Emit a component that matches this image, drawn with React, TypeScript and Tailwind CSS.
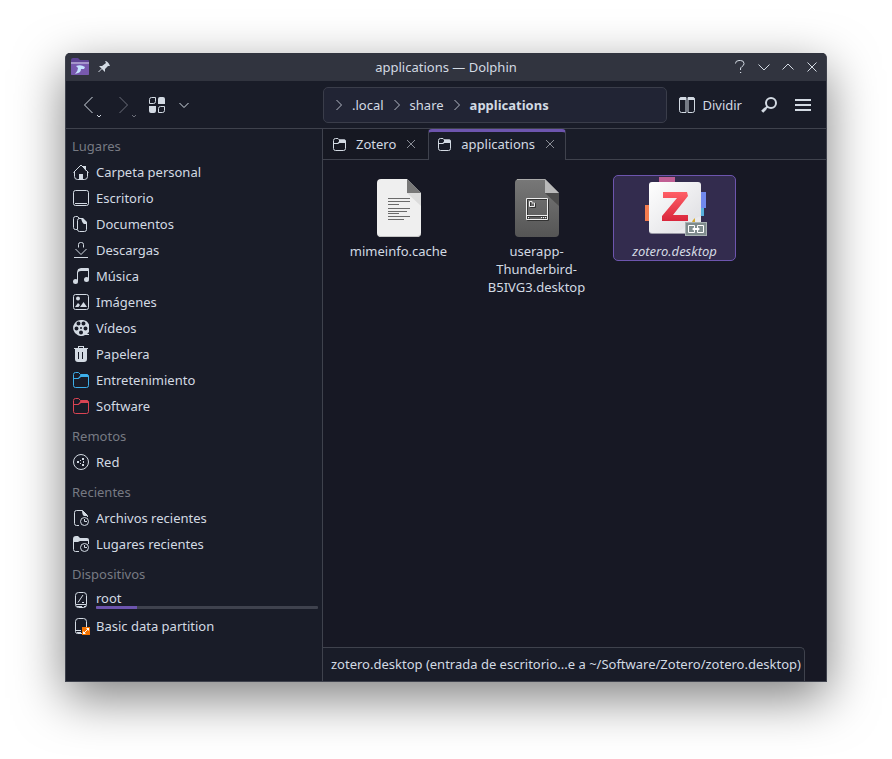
import type { ReactNode } from "react";

function Svg({ size = 16, children, className = "" }: { size?: number; children: ReactNode; className?: string }) {
  return (
    <svg width={size} height={size} viewBox={`0 0 ${size} ${size}`} fill="none" stroke="currentColor" className={`shrink-0 ${className}`} aria-hidden="true">
      {children}
    </svg>
  );
}

const HomeIcon = () => (
  <Svg>
    <path d="M.5 8.500 8 1 15.500 8.500M1.500 8v4.500q0 3 3 3h7q3 0 3-3V8" />
    <path d="M6 15v-5h4v5zM9 2h4v5z" fill="currentColor" stroke="none" />
  </Svg>
);
const DesktopIcon = () => (
  <Svg>
    <rect x=".5" y=".5" width="15" height="15" rx="2" />
    <path d="M2 13.500h12" />
  </Svg>
);
const DocumentsIcon = () => (
  <Svg>
    <path d="M4 13.500H2.500q-2 0-2-2v-9q0-2 2-2h2L7 3M6.500 2.500h3l4 4v7q0 2-2 2h-5q-2 0-2-2v-9q0-2 2-2z" />
    <path d="M4 0 8 3 6 3zM8 2h2l4 4v2H11Q9 7 8 2z" fill="currentColor" stroke="none" />
  </Svg>
);
const DownloadIcon = () => (
  <Svg>
    <path d="M5.500 5.500v-3q0-2 2-2h1q2 0 2 2v3M2.500 7 8 12.500 13.500 7M1 15.500h14" />
  </Svg>
);
const MusicIcon = () => (
  <Svg>
    <path d="M4.500 13V4q0-3.500 3.500-3.500h7.500V11" />
    <path d="M5 1h10v2H8Q5 3 5 5z" fill="currentColor" stroke="none" />
    <circle cx="2.500" cy="13.500" r="2.500" fill="currentColor" stroke="none" />
    <circle cx="13.500" cy="11.500" r="2.500" fill="currentColor" stroke="none" />
  </Svg>
);
const PictureIcon = () => (
  <Svg>
    <rect x=".5" y=".5" width="15" height="15" rx="2" />
    <circle cx="5" cy="4.500" r="2" fill="currentColor" stroke="none" />
    <path d="M7 13 10.500 8 14 13zM2 13l3-4 2 2-1.500 2z" fill="currentColor" stroke="none" />
  </Svg>
);
const VideoIcon = () => (
  <Svg>
    <path
      fillRule="evenodd"
      d="M8 0a8 8 0 1 0 4 15h4v-1h-2A8 8 0 0 0 8 0zM5.500 1.500a2 2 0 1 1 0 4 2 2 0 1 1 0-4zM10.500 1.500a2 2 0 1 1 0 4 2 2 0 1 1 0-4zM3.500 6.500a2 2 0 1 1 0 4 2 2 0 1 1 0-4zM12.500 6.500a2 2 0 1 1 0 4 2 2 0 1 1 0-4zM8 10.500a2 2 0 1 1 0 4 2 2 0 1 1 0-4zM8 7a1 1 0 1 1 0 2 1 1 0 1 1 0-2z"
      fill="currentColor"
      stroke="none"
    />
  </Svg>
);
const TrashIcon = () => (
  <Svg>
    <path fillRule="evenodd" d="M5 0h6v2h4v1h-1v10q0 3-3 3H5q-3 0-3-3V3H1V2h4zM6 1v1h4V1zM5 6v7h1V6zM9 6v7h1V6z" fill="currentColor" stroke="none" />
  </Svg>
);
const FolderIcon = ({ className = "" }: { className?: string }) => (
  <Svg className={className}>
    <path d="M.5 13.500v-11q0-2 2-2h3l2 2h6q2 0 2 2v9q0 2-2 2h-11q-2 0-2-2z" />
    <path d="M8 2h6l2 2v1H8L5.500 7H1V6h4L6.500 4.500z" fill="currentColor" stroke="none" />
  </Svg>
);
const NetworkIcon = () => (
  <Svg>
    <circle cx="8" cy="8" r="7.500" />
    <path d="M4 7h2v2H4zM9 4h2v2H9zM9 10h2v2H9zM7 6h1v1H7zM7 9h1v1H7zM10 7h1v2h-1z" fill="currentColor" stroke="none" />
  </Svg>
);
const Clock = () => (
  <>
    <circle cx="11.500" cy="11.500" r="4" />
    <path d="M11.500 9v2.500H14" />
  </>
);
const RecentFileIcon = () => (
  <Svg>
    <path d="M6 15.500H3.500q-2 0-2-2v-11q0-2 2-2h6l5 5V7" />
    <path d="M9 0l5 5v1H11Q9 5 9 0z" fill="currentColor" stroke="none" />
    <Clock />
  </Svg>
);
const RecentFolderIcon = () => (
  <Svg>
    <path d="M6 15.500H2.500q-2 0-2-2v-9M15.500 4v4" />
    <path d="M0 6V3q0-3 3-3h2l2 2h7q2 0 2 2v1H7L5 6z" fill="currentColor" stroke="none" />
    <Clock />
  </Svg>
);
const RootIcon = () => (
  <Svg>
    <rect x="2.500" y=".5" width="11" height="15" rx="3" />
    <path d="M3 12.500h10M5 10.500 10 3M9 10.500h2" />
    <path d="M4 14.500h5M11 14.500h2" />
  </Svg>
);
const PartitionIcon = () => (
  <Svg className="overflow-visible">
    <path d="M9 15.500H4.500q-2 0-2-2v-10q0-3 3-3h5q3 0 3 3V9M3 12.500h5M4 14.500h4" />
    <path d="M9 9h8v8H9z" fill="#f67400" stroke="none" />
    <path d="M10 16v-3l3 3zM16 10v3l-3-3z" fill="#fff" stroke="none" />
    <path d="M11 15l4-4" stroke="#fff" />
  </Svg>
);

type Place = { label: string; icon: ReactNode; usage?: number };
const groups: { title: string; places: Place[] }[] = [
  {
    title: "Lugares",
    places: [
      { label: "Carpeta personal", icon: <HomeIcon /> },
      { label: "Escritorio", icon: <DesktopIcon /> },
      { label: "Documentos", icon: <DocumentsIcon /> },
      { label: "Descargas", icon: <DownloadIcon /> },
      { label: "Música", icon: <MusicIcon /> },
      { label: "Imágenes", icon: <PictureIcon /> },
      { label: "Vídeos", icon: <VideoIcon /> },
      { label: "Papelera", icon: <TrashIcon /> },
      { label: "Entretenimiento", icon: <FolderIcon className="text-[#3daee9]" /> },
      { label: "Software", icon: <FolderIcon className="text-[#da4453]" /> },
    ],
  },
  { title: "Remotos", places: [{ label: "Red", icon: <NetworkIcon /> }] },
  {
    title: "Recientes",
    places: [
      { label: "Archivos recientes", icon: <RecentFileIcon /> },
      { label: "Lugares recientes", icon: <RecentFolderIcon /> },
    ],
  },
  {
    title: "Dispositivos",
    places: [
      { label: "root", icon: <RootIcon />, usage: 18.5 },
      { label: "Basic data partition", icon: <PartitionIcon /> },
    ],
  },
];

function TitleBar() {
  return (
    <header className="relative flex h-7 items-center justify-between bg-[#31343f] pr-1.5 pl-1">
      <div className="flex items-center gap-[7px]">
        <Svg size={20} className="text-white">
          <path d="M1 3q0-2 2-2h5l2 2h8q1 0 1 1v13q0 1-1 1H2q-1 0-1-1z" fill="#5d4393" stroke="none" />
          <path d="M1 5h18v4H1z" fill="#a596cb" stroke="none" />
          <path d="M1 7h18v10q0 1-1 1H2q-1 0-1-1z" fill="#7759ae" stroke="none" />
          <path d="M6 9q5-2 9 1l-1 2-3 0q0 3-3 4l-3 1q3-3 3-6z" fill="#c5e3ff" stroke="none" />
        </Svg>
        <button type="button" aria-label="Fijar" className="flex">
          <Svg size={14}>
            <path d="M8 1q3 0 5 5l-2 0-3 3v3L2 6h3l4-3z" fill="currentColor" stroke="none" />
            <path d="M5 8.500 1.500 12" />
          </Svg>
        </button>
      </div>
      <h1 className="pointer-events-none absolute inset-x-0 pt-0.5 text-center">applications — Dolphin</h1>
      <div className="flex gap-2">
        <button type="button" aria-label="Ayuda" className="flex">
          <Svg>
            <path d="M3.500 4.500Q3.500 1.500 7 1.500h1.500q3.500 0 3.500 3 0 2-2 3T8.500 11M8 13.500h1.200" />
          </Svg>
        </button>
        <button type="button" aria-label="Minimizar" className="flex">
          <Svg>
            <path d="M2.500 5.500 8 11l5.500-5.500" />
          </Svg>
        </button>
        <button type="button" aria-label="Maximizar" className="flex">
          <Svg>
            <path d="M2.500 10.500 8 5l5.500 5.500" />
          </Svg>
        </button>
        <button type="button" aria-label="Cerrar" className="flex">
          <Svg>
            <path d="M3.500 3.500l9 9M12.500 3.500l-9 9" />
          </Svg>
        </button>
      </div>
    </header>
  );
}

const Crumb = () => (
  <Svg size={12} className="text-[#b4b8c4]">
    <path d="M3.500 1 8.500 6l-5 5" />
  </Svg>
);

function Toolbar() {
  return (
    <div className="flex items-center border-b border-[#3f424d] pt-1.5 pr-[15px] pb-[5px]">
      <div className="flex w-[257px] shrink-0 items-center pl-[11px]">
        <button type="button" aria-label="Atrás" className="flex">
          <Svg size={26}>
            <path d="M15.500 5 7.500 13l8 8M20 23l2 2 2-2" />
          </Svg>
        </button>
        <button type="button" aria-label="Adelante" className="ml-[9px] flex text-[#6c6f7a]">
          <Svg size={26}>
            <path d="M7.500 5l8 8-8 8M20 23l2 2 2-2" />
          </Svg>
        </button>
        <button type="button" aria-label="Modo de vista" className="ml-[11px] flex items-center gap-3.5">
          <Svg>
            <path d="M.5 6.500v-4q0-2 2-2h4v4q0 2-2 2zM9.500 15.500v-4q0-2 2-2h4v4q0 2-2 2z" />
            <path d="M9 7V2q0-2 2-2h3q2 0 2 2v5zM7 9v5q0 2-2 2H2q-2 0-2-2V9z" fill="currentColor" stroke="none" />
          </Svg>
          <Svg size={10}>
            <path d="M.5 3 5 7.500 9.500 3" />
          </Svg>
        </button>
      </div>
      <nav aria-label="Ruta" className="flex h-9 grow items-center gap-[7px] rounded-[5px] border border-[#3a3d4a] bg-[#212434] px-[9px]">
        <Crumb />
        <a href="#local" className="pt-0.5">.local</a>
        <Crumb />
        <a href="#share" className="pt-0.5">share</a>
        <Crumb />
        <a href="#applications" className="pt-0.5 font-bold">applications</a>
      </nav>
      <button type="button" className="ml-3 flex items-center gap-[7px]">
        <Svg>
          <path d="M.5 13.500v-11q0-2 2-2h4.500v15H2.500q-2 0-2-2zM9 .5h4.500q2 0 2 2v11q0 2-2 2H9z" />
          <path d="M0 3q0-3 3-3h4v3zM9 0h4q3 0 3 3H9z" fill="currentColor" stroke="none" />
        </Svg>
        <span className="pt-0.5">Dividir</span>
      </button>
      <button type="button" aria-label="Buscar" className="ml-[19px] flex">
        <Svg>
          <circle cx="10" cy="6" r="5" strokeWidth="2" />
          <path d="M6.500 9.500 4 12" strokeWidth="2" />
          <path d="M4.500 11.500 1.200 14.800" strokeWidth="3" />
        </Svg>
      </button>
      <button type="button" aria-label="Menú" className="ml-[18px] flex">
        <Svg>
          <path d="M0 3h16M0 8h16M0 13h16" strokeWidth="2" />
        </Svg>
      </button>
    </div>
  );
}

function Sidebar() {
  return (
    <aside className="w-[257px] shrink-0 border-r border-[#3f424d] pt-1 pr-1 pl-1.5">
      {groups.map((g) => (
        <section key={g.title} className="mb-1">
          <h2 className="flex h-[26px] items-center pt-0.5 text-[#777a83]">{g.title}</h2>
          <ul>
            {g.places.map((p) => (
              <li key={p.label}>
                <a href="#lugar" className="flex h-[26px] items-center gap-[7px] pl-px">
                  {p.icon}
                  {p.usage === undefined ? (
                    <span className="pt-0.5">{p.label}</span>
                  ) : (
                    <span className="flex grow flex-col pb-px">
                      <span className="leading-4">{p.label}</span>
                      <span className="h-[3px] overflow-hidden rounded-[1px] bg-[#3f424e]">
                        <span className="block h-full bg-[#6d55ae]" style={{ width: `${p.usage}%` }} />
                      </span>
                    </span>
                  )}
                </a>
              </li>
            ))}
          </ul>
        </section>
      ))}
    </aside>
  );
}

function Tab({ label, active = false }: { label: string; active?: boolean }) {
  return (
    <div
      className={
        active
          ? "-mb-px flex items-center rounded-t-[4px] border-x border-t-3 border-x-[#3f424d] border-t-[#6d55ae] bg-[#191c28] pr-2.5 pb-1 pl-[9px]"
          : "flex items-center bg-[#161822] pr-3 pl-2.5"
      }
    >
      <button type="button" role="tab" aria-selected={active} className="flex items-center gap-2.5">
        <Svg size={13}>
          <path d="M.5 10.500v-8q0-2 2-2H5l1.500 1.500H11q1.500 0 1.500 1.500v7q0 2-2 2h-8q-2 0-2-2z" />
          <path d="M6 1.500h6L13 3v2H6.500L5 6H1V5h3.500L6 3.500z" fill="currentColor" stroke="none" />
        </Svg>
        <span className="pt-0.5">{label}</span>
      </button>
      <button type="button" aria-label={`Cerrar ${label}`} className="ml-2.5 flex text-[#8a8d96]">
        <Svg size={10}>
          <path d="M1 1l8 8M9 1 1 9" />
        </Svg>
      </button>
    </div>
  );
}

const TextFile = () => (
  <Svg size={64}>
    <path d="M10 7q0-4 4-4h26l14 14v40q0 4-4 4H14q-4 0-4-4z" fill="#efefef" stroke="none" />
    <path d="M11 59q1 2 3 2h36q3 0 4-3v-1q-1 3-4 3H14q-3 0-4-3z" fill="#c4c4c4" stroke="none" />
    <path d="M40 17h14v13z" fill="#dcdcdc" stroke="none" />
    <path d="M40 3l14 14H40z" fill="#787878" stroke="none" />
    <path d="M21 22.500h22M21 25.500h22M21 28.500h11M21 32.500h22M21 35.500h19M21 37.500h11M21 40.500h22M21 43.500h16" stroke="#6a6a6a" />
  </Svg>
);
const DesktopFile = () => (
  <Svg size={64}>
    <defs>
      <linearGradient id="gray" x1="0" y1="0" x2="0" y2="1">
        <stop stopColor="#787878" />
        <stop offset="1" stopColor="#555" />
      </linearGradient>
    </defs>
    <path d="M10 7q0-4 4-4h26l14 14v40q0 4-4 4H14q-4 0-4-4z" fill="url(#gray)" stroke="none" />
    <path d="M12 3.500h28" stroke="#aaa" />
    <path d="M40 17h14v13z" fill="#4c4c4c" stroke="none" />
    <path d="M40 3l14 14H40z" fill="#b9b9b9" stroke="none" />
    <path d="M22.500 23.500h21v21h-21zM22 40.500h22M25.500 26.500v5h5v-4h-2v-1zM24 42.500h1M37 42.500h1M39 42.500h1M41 42.500h1" stroke="#333" />
    <path d="M21.500 22.500h21v21h-21zM21 39.500h22M24.500 25.500v5h5v-3.500h-2.500v-1.500zM23 41.500h1M36 41.500h1M38 41.500h1M40 41.500h1" stroke="#eee" />
  </Svg>
);
const ZoteroFile = () => (
  <Svg size={64}>
    <defs>
      <linearGradient id="paper" x1="0" y1="0" x2="1" y2="1">
        <stop stopColor="#fff" />
        <stop offset="1" stopColor="#dcdce0" />
      </linearGradient>
      <linearGradient id="red" x1="0" y1="0" x2="0" y2="1">
        <stop stopColor="#ff5f66" />
        <stop offset="1" stopColor="#d9263c" />
      </linearGradient>
    </defs>
    <path d="M16 1h16v8H16z" fill="#c05f94" stroke="none" />
    <path d="M56 16h7v16h-7z" fill="#7189ee" stroke="none" />
    <path d="M56 32h5v8h-5z" fill="#56b0dc" stroke="none" />
    <path d="M2 29h6v16H2z" fill="#f47c4e" stroke="none" />
    <rect x="6" y="8" width="52" height="50" rx="3" fill="#9998a5" stroke="none" />
    <path d="M6 9q0-3 3-3h46q3 0 3 3v30L40 57H9q-3 0-3-3z" fill="url(#paper)" stroke="none" />
    <path d="M30 56q14-2 14-12 8 0 14-5v15q0 3-3 3H30z" fill="#e9e9ec" stroke="none" />
    <path d="M20 16h24l1 4-15 19h15v6H19v-5l15-18H20z" fill="url(#red)" stroke="none" />
    <path d="M50 44l2-2v4h-3z" fill="#d6a92e" stroke="none" />
    <rect x="42.500" y="46.500" width="21" height="13" fill="#7f8c8d" stroke="#a8b2b2" />
    <path d="M51.500 51v-1.500h-6v7h6V55M54.500 51v-1.500h6v7h-6V55" stroke="#fff" />
    <path d="M49 53l3-2.500V52h2v-1.500L57 53l-3 2.500V54h-2v1.500z" fill="#fff" stroke="none" />
  </Svg>
);

function FileItem({ name, icon, selected = false }: { name: string; icon: ReactNode; selected?: boolean }) {
  return (
    <button
      type="button"
      className={`flex w-[123px] flex-col items-center self-start rounded-[5px] border leading-[18px] ${
        selected ? "border-[#6d55ae] bg-[#332c4e] italic" : "border-transparent"
      }`}
    >
      {icon}
      <span className="mt-0.5 w-full whitespace-pre-line">{name}</span>
    </button>
  );
}

export default function App() {
  return (
    <div className="flex min-h-screen bg-white px-[65px] pt-[53px] pb-[77px] font-['Noto_Sans',sans-serif] text-[13px] text-[#d3dae3]">
      <div className="flex grow flex-col overflow-hidden rounded-t-[5px] border border-t-0 border-[#3f424d] bg-[#191c28] shadow-[0_16px_50px_rgba(0,0,0,0.5)]">
        <TitleBar />
        <Toolbar />
        <div className="flex grow">
          <Sidebar />
          <main className="flex min-w-0 grow flex-col bg-[#171824]">
            <div role="tablist" className="flex h-[31px] border-b border-[#3f424d] bg-[#191c28]">
              <Tab label="Zotero" />
              <Tab label="applications" active />
            </div>
            <div className="flex grow flex-wrap content-start gap-[15px] px-3.5 pt-[15px]">
              <FileItem name="mimeinfo.cache" icon={<TextFile />} />
              <FileItem name={"userapp-\nThunderbird-\nB5IVG3.desktop"} icon={<DesktopFile />} />
              <FileItem name="zotero.desktop" icon={<ZoteroFile />} selected />
            </div>
            <footer className="flex h-[34px] items-center self-start rounded-tr-[5px] border-t border-r border-[#3f424d] bg-[#191c28] pr-[3px] pl-2 whitespace-nowrap">
              zotero.desktop (entrada de escritorio...e a ~/Software/Zotero/zotero.desktop)
            </footer>
          </main>
        </div>
      </div>
    </div>
  );
}
